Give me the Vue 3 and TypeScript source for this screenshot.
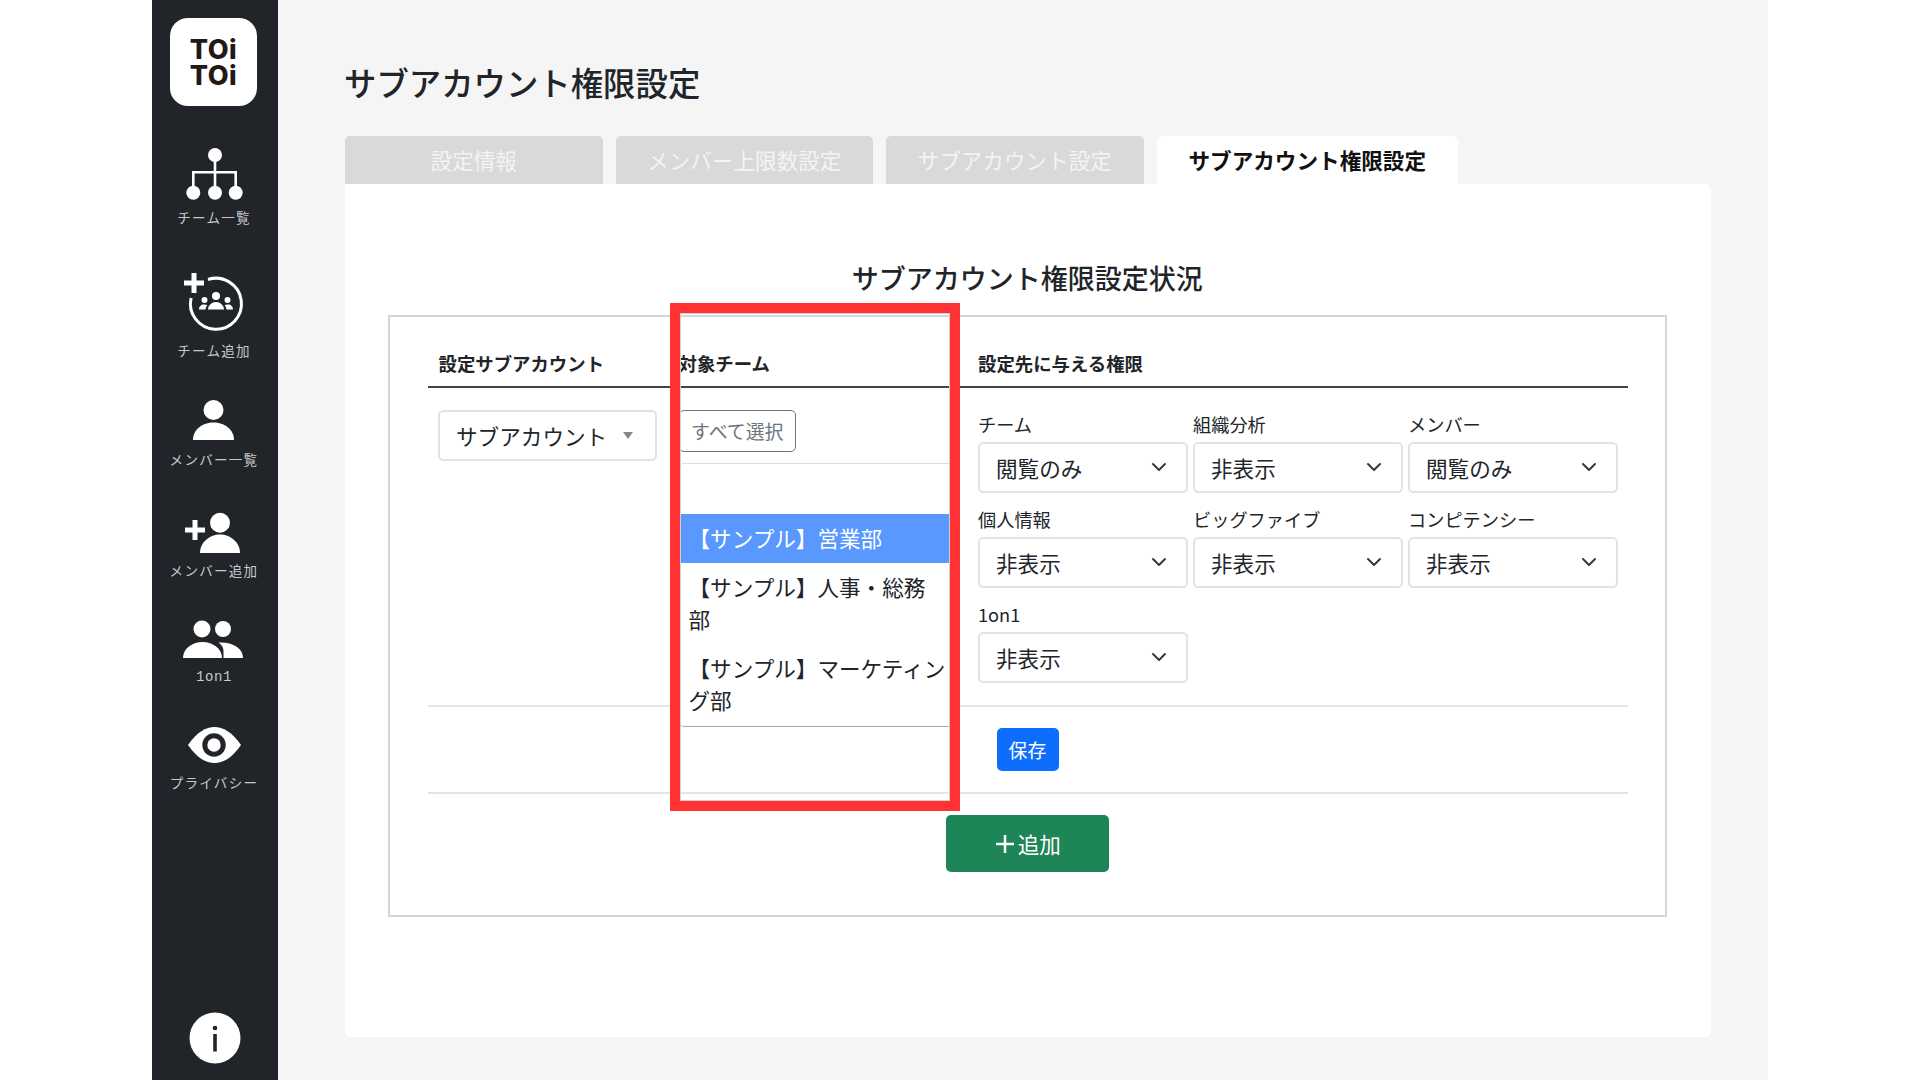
<script setup lang="ts">
interface Permission {
  label: string;
  value: string;
}

const tabs = ['設定情報', 'メンバー上限数設定', 'サブアカウント設定'];

const permissions: Permission[] = [
  { label: 'チーム', value: '閲覧のみ' },
  { label: '組織分析', value: '非表示' },
  { label: 'メンバー', value: '閲覧のみ' },
  { label: '個人情報', value: '非表示' },
  { label: 'ビッグファイブ', value: '非表示' },
  { label: 'コンピテンシー', value: '非表示' },
  { label: '1on1', value: '非表示' },
];

const teams = ['', '【サンプル】営業部', '【サンプル】人事・総務\n部', '【サンプル】マーケティン\nグ部'];
</script>

<template>
  <div class="page">
    <aside class="sidebar">
      <div class="logo"><div>TOi</div><div>TOi</div></div>

      <a class="nav-item nav-team">
        <svg width="70" height="60" viewBox="-5 0 70 60" fill="#fff">
          <path d="M8.3 45V24.3H50.7V45M30 7V45" fill="none" stroke="#fff" stroke-width="2.6" />
          <circle cx="30" cy="7" r="7" />
          <circle cx="8.3" cy="44.7" r="7" />
          <circle cx="30" cy="44.7" r="7" />
          <circle cx="50.7" cy="44.7" r="7" />
        </svg>
        <span>チーム一覧</span>
      </a>

      <a class="nav-item nav-team-add">
        <svg width="70" height="70" viewBox="-5 0 70 70" fill="#fff">
          <path d="M23 8.5A25.5 25.5 0 1 1 6.1 27" fill="none" stroke="#fff" stroke-width="3" />
          <path d="M-1 12H19M9 2V22" fill="none" stroke="#fff" stroke-width="5" />
          <circle cx="31" cy="25" r="4" />
          <circle cx="19.5" cy="29" r="3" />
          <circle cx="42.5" cy="29" r="3" />
          <path d="M23 38.5a8 7.5 0 0 1 16 0zM14 38.5c0-3 2-5 5-5 1.500 0 2.500.4 3.300 1-1 1-1.600 2.400-1.800 4zM48 38.500c0-3-2-5-5-5-1.500 0-2.500.4-3.300 1 1 1 1.600 2.400 1.800 4z" />
        </svg>
        <span>チーム追加</span>
      </a>

      <a class="nav-item nav-member">
        <svg width="70" height="52" viewBox="-5 0 70 52" fill="#fff">
          <circle cx="28.500" cy="12" r="10" />
          <path d="M8 42C8 31 18 24.500 28.500 24.500S49 31 49 42Z" />
        </svg>
        <span>メンバー一覧</span>
      </a>

      <a class="nav-item nav-member-add">
        <svg width="70" height="52" viewBox="-5 0 70 52" fill="#fff">
          <circle cx="35" cy="13.700" r="10" />
          <path d="M15 44C15 33 25 25.500 35 25.500S55 33 55 44Z" />
          <path d="M0 21H20M10 11V31" fill="none" stroke="#fff" stroke-width="5" />
        </svg>
        <span>メンバー追加</span>
      </a>

      <a class="nav-item nav-one">
        <svg width="70" height="52" viewBox="-5 0 70 52" fill="#fff">
          <circle cx="17" cy="13" r="8.500" />
          <circle cx="38" cy="13" r="8" />
          <path d="M-2 42C-2 32 8 26 17.500 26S37 32 37 42Z" />
          <path d="M38.500 42V35C38.500 31.500 36.500 28.500 33.500 26.500C48 26 58 32 58 42Z" />
        </svg>
        <span class="nav-mono">1on1</span>
      </a>

      <a class="nav-item nav-privacy">
        <svg width="70" height="49" viewBox="-5 0 70 49" fill="#fff">
          <path d="M3 21C12 8 21 3 29.500 3S47 8 56 21C47 34 38 39 29.500 39S12 34 3 21Z" />
          <circle cx="29" cy="21" r="11.700" fill="#212529" />
          <circle cx="29" cy="21" r="6.700" />
        </svg>
        <span>プライバシー</span>
      </a>

      <div class="info">
        <svg width="52" height="52" viewBox="0 0 52 52">
          <circle cx="26" cy="26" r="25.500" fill="#fff" />
          <circle cx="26" cy="16" r="2.300" fill="#212529" />
          <rect x="24.200" y="22" width="3.600" height="17.500" fill="#212529" />
        </svg>
      </div>
    </aside>

    <main class="main">
      <h1 class="page-title">サブアカウント権限設定</h1>

      <div class="tabs">
        <div v-for="tab in tabs" :key="tab" class="tab">{{ tab }}</div>
        <div class="tab active">サブアカウント権限設定</div>
      </div>

      <section class="card">
        <h2 class="card-title">サブアカウント権限設定状況</h2>

        <div class="box">
          <div class="grid head">
            <div class="head-first">設定サブアカウント</div>
            <div>対象チーム</div>
            <div>設定先に与える権限</div>
          </div>

          <div class="grid row-main">
            <div class="col-account">
              <div class="select account-select">
                <span>サブアカウント</span>
                <i class="caret" />
              </div>
            </div>

            <div class="col-team">
              <button class="select-all" type="button">すべて選択</button>
              <div class="listbox">
                <div
                  v-for="(team, i) in teams"
                  :key="i"
                  class="option"
                  :class="{ selected: i === 1, blank: i === 0 }"
                >{{ team }}</div>
              </div>
            </div>

            <div class="perm-grid">
              <div v-for="perm in permissions" :key="perm.label" class="field">
                <label>{{ perm.label }}</label>
                <div class="select">
                  <span>{{ perm.value }}</span>
                  <svg class="chevron" width="16" height="16" viewBox="0 0 16 16">
                    <path d="M2 5l6 6 6-6" fill="none" stroke="#343a40" stroke-width="2" stroke-linecap="round" stroke-linejoin="round" />
                  </svg>
                </div>
              </div>
            </div>
          </div>

          <div class="grid row-save">
            <div />
            <div />
            <div class="save-cell">
              <button class="btn-save" type="button">保存</button>
            </div>
          </div>

          <div class="add-row">
            <button class="btn-add" type="button">
              <svg width="20" height="20" viewBox="0 0 20 20">
                <path d="M10 1V19M1 10H19" fill="none" stroke="#fff" stroke-width="2.500" />
              </svg>
              <span>追加</span>
            </button>
          </div>
        </div>
      </section>
    </main>

    <div class="highlight" />
  </div>
</template>

<style>
html,
body {
  margin: 0;
  background: #fff;
}
</style>

<style scoped>
.page {
  position: relative;
  display: flex;
  box-sizing: border-box;
  width: 1920px;
  height: 1080px;
  padding: 0 152px;
  overflow: hidden;
  background: #fff;
  color: #212529;
  font-family: "Noto Sans CJK JP", "Noto Sans", sans-serif;
}

.sidebar {
  display: flex;
  flex-direction: column;
  align-items: center;
  flex: 0 0 126px;
  background: #212529;
}

.logo {
  box-sizing: border-box;
  flex: 0 0 88px;
  width: 87px;
  margin: 18px 3px 0 0;
  padding-top: 19px;
  border-radius: 18px;
  background: #fff;
  color: #231815;
  font-family: Inter, sans-serif;
  font-size: 27px;
  font-weight: 800;
  line-height: 26px;
  letter-spacing: 0.5px;
  text-align: center;
}

.nav-item {
  display: flex;
  flex-direction: column;
  align-items: center;
  justify-content: flex-end;
  width: 100%;
  color: #c8c8c8;
  font-size: 13.5px;
  line-height: 18px;
  letter-spacing: 1.3px;
}

.nav-item svg {
  display: block;
}

.nav-item span {
  padding: 0 2px 2px 0;
}

.nav-team {
  height: 122px;
}

.nav-team-add {
  height: 133px;
}

.nav-member {
  height: 109px;
}

.nav-member-add {
  height: 111px;
}

.nav-one {
  height: 106px;
}

.nav-privacy {
  height: 106px;
}

.nav-item .nav-mono {
  padding-bottom: 1px;
  font-family: "Liberation Mono", monospace;
  font-size: 14px;
  letter-spacing: 0.6px;
}

.info {
  margin-top: auto;
  padding-bottom: 16px;
  line-height: 0;
}

.main {
  flex: 1;
  box-sizing: border-box;
  padding: 60px 57px 43px 67px;
  background: #f5f5f5;
}

.page-title {
  margin: 0 0 0 -1px;
  font-size: 32.4px;
  font-weight: 500;
  line-height: 44px;
  color: #212529;
}

.tabs {
  display: flex;
  gap: 13px;
  margin-top: 32px;
  height: 48px;
}

.tab {
  width: 257.500px;
  border-radius: 5px 5px 0 0;
  background: #d9d9d9;
  color: #f4f4f4;
  font-size: 21.6px;
  line-height: 48px;
  text-align: center;
}

.tab.active {
  width: 301.500px;
  background: #fff;
  color: #111;
  font-weight: 700;
}

.card {
  box-sizing: border-box;
  height: 853px;
  padding: 74px 44px 0 42.500px;
  border-radius: 0 6px 6px 6px;
  background: #fff;
}

.card-title {
  margin: 0 0 17px;
  font-size: 27px;
  font-weight: 500;
  line-height: 40px;
  text-align: center;
}

.box {
  box-sizing: border-box;
  height: 602px;
  padding: 0 37px 0 38px;
  border: 2px solid #d6d6d6;
}

.grid {
  display: grid;
  grid-template-columns: 251px 299.500px 1fr;
}

.head {
  box-sizing: border-box;
  height: 71px;
  padding-top: 33px;
  border-bottom: 2px solid #444;
  font-size: 18.4px;
  font-weight: 700;
  line-height: 26px;
}

.head-first {
  padding-left: 11px;
}

.row-main {
  box-sizing: border-box;
  height: 319px;
  border-bottom: 2px solid #e2e5e9;
}

.col-account {
  padding: 22px 0 0 10.500px;
}

.select {
  display: flex;
  align-items: center;
  justify-content: space-between;
  box-sizing: border-box;
  height: 51px;
  padding: 0 20px 0 16px;
  border: 2px solid #dfe3e8;
  border-radius: 5.400px;
  background: #fff;
  font-size: 21.6px;
  line-height: 32px;
}

.account-select {
  width: 218.500px;
  padding-right: 22px;
}

.caret {
  width: 0;
  height: 0;
  border-top: 7px solid #888;
  border-right: 5.500px solid transparent;
  border-left: 5.500px solid transparent;
}

.col-team {
  position: relative;
  padding-top: 22px;
}

.select-all {
  display: block;
  box-sizing: border-box;
  width: 117.500px;
  height: 42px;
  padding: 0;
  border: 1.400px solid #6c757d;
  border-radius: 5px;
  background: #fff;
  color: #6c757d;
  font-family: inherit;
  font-size: 18.9px;
  line-height: 26px;
}

.listbox {
  position: absolute;
  top: 75px;
  left: 0;
  z-index: 1;
  box-sizing: border-box;
  width: 276px;
  height: 264px;
  overflow: hidden;
  border: 1.400px solid #d9dde2;
  border-bottom-color: #a8a8a8;
  border-radius: 5px;
  background: #fff;
}

.option {
  padding: 8.100px 0 8.100px 9px;
  font-size: 21.6px;
  line-height: 32.400px;
  white-space: pre-line;
}

.option.blank {
  height: 33.600px;
}

.option.selected {
  padding-bottom: 8.600px;
  background: #5998ff;
  color: #fff;
}

.perm-grid {
  display: grid;
  grid-template-columns: repeat(3, 209.500px);
  column-gap: 5.500px;
  row-gap: 13px;
  align-content: start;
  padding: 23px 0 0;
}

.field label {
  display: block;
  margin-bottom: 5px;
  font-size: 18.2px;
  line-height: 26px;
}

.chevron {
  flex: none;
  margin-right: -1px;
  margin-top: -1px;
}

.row-save {
  box-sizing: border-box;
  height: 87px;
  border-bottom: 2px solid #e2e5e9;
}

.save-cell {
  padding: 21px 0 0 18.500px;
}

.btn-save {
  display: block;
  width: 62px;
  height: 43px;
  padding: 0;
  border: 0;
  border-radius: 5px;
  background: #0d6efd;
  color: #fff;
  font-family: inherit;
  font-size: 18.9px;
}

.add-row {
  display: flex;
  justify-content: center;
  padding-top: 21px;
}

.btn-add {
  display: flex;
  align-items: center;
  justify-content: center;
  gap: 3px;
  width: 163px;
  height: 57px;
  padding: 0;
  border: 0;
  border-radius: 5px;
  background: #1e8557;
  color: #fff;
  font-family: inherit;
  font-size: 21.6px;
}

.highlight {
  position: absolute;
  top: 303px;
  left: 670px;
  z-index: 2;
  box-sizing: border-box;
  width: 290px;
  height: 508px;
  border: 10px solid #ff3333;
  box-shadow: inset 0 0 0 1px #d0d0d0;
  pointer-events: none;
}
</style>
